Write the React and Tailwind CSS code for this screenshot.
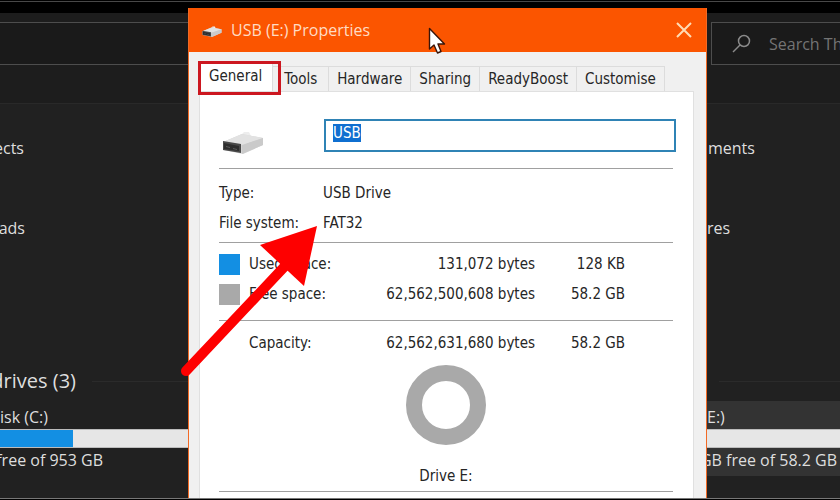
import { useEffect, useRef, useState } from "react";

const tabs = ["General", "Tools", "Hardware", "Sharing", "ReadyBoost", "Customise"];

const usage = [
  { label: "Used space:", bytes: "131,072 bytes", size: "128 KB", color: "bg-[#138fe3]" },
  { label: "Free space:", bytes: "62,562,500,608 bytes", size: "58.2 GB", color: "bg-[#a9a9a9]" },
];

function UsbIcon({ className }) {
  return (
    <svg viewBox="0 0 42 24" className={className} aria-hidden="true">
      <path d="M20 3 L22 1 L27 1 L29 5 Z" fill="#ededed" />
      <path d="M1 11 L20 3 L41 7 L41 14 L21 23 L1 19 Z" fill="#d4d4d4" />
      <path d="M1 11 L20 3 L41 7 L21 14 Z" fill="#e2e2e2" />
      <path d="M20 14 L41 7 L41 14 L20 23 Z" fill="#cacaca" />
      <path d="M1 10 L19 13 L19 22 L1 19 Z" fill="#4a4a4a" />
      <path d="M2 12 L17 15 L17 20 L2 18 Z" fill="#2e2e2e" />
      <path d="M4 15 L8 16 L8 17 L4 16 Z M11 17 L15 18 L15 19 L11 18 Z" fill="#5c5c5c" />
    </svg>
  );
}

function LeftPane() {
  return (
    <section className="flex w-[188px] shrink-0 flex-col overflow-hidden bg-[#212121] text-[#dedede]">
      <div className="h-[5px] bg-black" />
      <div className="border-b border-[#292929] bg-[#1d1d1d] pt-[9px] pb-[38px]">
        <div className="h-[43px] border-y border-[#4d4d4d] bg-[#1a1a1a]" />
      </div>
      <div className="flex h-20 w-6 items-center justify-end pt-2 text-base">ects</div>
      <div className="flex h-20 w-[25px] items-center justify-end pt-2 text-base">ads</div>
      <div className="mt-[97px] flex h-10 items-center gap-4">
        <h2 className="flex w-[76px] shrink-0 justify-end text-xl whitespace-nowrap">drives (3)</h2>
        <div className="h-px grow bg-[#2b2b2b]" />
      </div>
      <div className="mt-1 flex h-6 w-12 items-center justify-end text-base whitespace-nowrap">isk (C:)</div>
      <div className="h-[19px] border-y border-[#bcbcbc] bg-[#e6e6e6]">
        <div className="h-full w-[73px] bg-[#138fe3]" />
      </div>
      <div className="flex h-6 w-[103px] items-center justify-end text-base whitespace-nowrap">free of 953 GB</div>
    </section>
  );
}

function RightPane() {
  return (
    <section className="flex w-[133px] shrink-0 flex-col overflow-hidden bg-[#212121] text-[#dedede]">
      <div className="h-[5px] bg-black" />
      <div className="border-b border-[#292929] bg-[#1d1d1d] pt-[9px] pb-[38px] pl-1">
        <label className="flex h-[43px] items-center gap-[18px] border-y border-l border-[#4d4d4d] bg-[#1a1a1a] pl-5">
          <svg viewBox="0 0 19 19" className="size-[19px] shrink-0" fill="none" stroke="#8a8a8a" strokeWidth="1.5" aria-hidden="true">
            <circle cx="12" cy="7" r="5.5" />
            <path d="M8 11 L1 18" />
          </svg>
          <input
            type="search"
            aria-label="Search"
            placeholder="Search This PC"
            className="w-40 shrink-0 bg-transparent text-base outline-none placeholder:text-[#747474]"
          />
        </label>
      </div>
      <div className="flex h-20 items-center pt-2 pl-px text-base">ments</div>
      <div className="flex h-20 items-center pt-2 text-base">res</div>
      <div className="mt-[97px] flex h-10 items-center pl-3">
        <div className="h-px grow bg-[#2b2b2b]" />
      </div>
      <div className="bg-[#333] pt-1 pb-1">
        <div className="flex h-6 items-center text-base">E:)</div>
        <div className="h-[19px] border-y border-[#bcbcbc] bg-[#e6e6e6]" />
        <div className="flex h-6 w-[130px] items-center justify-end text-base whitespace-nowrap">GB free of 58.2 GB</div>
      </div>
    </section>
  );
}

function TabBar({ active, onSelect }) {
  return (
    <div role="tablist" className="flex h-[29px] items-end text-[15px]">
      {tabs.map((tab) => (
        <button
          key={tab}
          role="tab"
          aria-selected={tab === active}
          onClick={() => onSelect(tab)}
          className={
            tab === active
              ? "h-[29px] border-r border-[#dcdcdc] bg-white px-[10px]"
              : "h-[25px] min-w-14 border-t border-r border-[#dcdcdc] px-2"
          }
        >
          {tab}
        </button>
      ))}
    </div>
  );
}

function PropertiesDialog() {
  const [active, setActive] = useState("General");
  const [name, setName] = useState("USB");
  const nameRef = useRef(null);

  useEffect(() => {
    nameRef.current?.focus();
    nameRef.current?.select();
  }, []);

  return (
    <section role="dialog" aria-label="USB (E:) Properties" className="flex min-w-0 grow flex-col border-x border-[#f26a25] bg-[#f0f0f0] text-[#262626]">
      <header className="flex h-11 items-center bg-[#fb5500] pr-[14px] pl-[13px] text-[#ffdcc4]">
        <UsbIcon className="mt-1 w-5" />
        <h1 className="ml-[9px] grow font-['Open_Sans',sans-serif] text-base">USB (E:) Properties</h1>
        <button aria-label="Close">
          <svg viewBox="0 0 16 16" className="size-4" stroke="#ffdcb4" strokeWidth="2" aria-hidden="true">
            <path d="M1 1 L15 15 M15 1 L1 15" />
          </svg>
        </button>
      </header>

      <div className="flex grow flex-col pt-[10px] pr-3 pl-[10px] font-['DejaVu_Sans_Condensed','DejaVu_Sans',sans-serif]">
        <TabBar active={active} onSelect={setActive} />
        <div className="grow border-x border-t border-[#e0e0e0] bg-white pr-5 pl-[19px] text-[15px]">
          <div className="flex h-[77px] items-center border-b border-[#a0a0a0] pt-[10px]">
            <UsbIcon className="mt-4 ml-[3px] w-[42px]" />
            <input
              ref={nameRef}
              aria-label="Volume name"
              value={name}
              onChange={(e) => setName(e.target.value)}
              className="-mr-[3px] ml-[60px] h-[33px] min-w-0 grow border-2 border-[#2f83b5] px-[7px] pb-1 outline-none selection:bg-[#0f6fd0] selection:text-white"
            />
          </div>

          <dl className="grid grid-cols-[104px_1fr] border-b border-[#a0a0a0] pt-[9px] pb-1 leading-[30px]">
            <dt>Type:</dt>
            <dd>USB Drive</dd>
            <dt>File system:</dt>
            <dd>FAT32</dd>
          </dl>

          <table className="mt-[6px] w-full">
            <tbody>
              {usage.map((row) => (
                <tr key={row.label} className="h-[30px]">
                  <td className="w-[30px]"><div className={`size-[21px] ${row.color}`} /></td>
                  <td>{row.label}</td>
                  <td className="w-[170px] text-right">{row.bytes}</td>
                  <td className="w-[138px] pr-12 text-right">{row.size}</td>
                </tr>
              ))}
              <tr className="h-[11px]"><td colSpan={4} /></tr>
              <tr className="h-[45px] border-t border-[#a0a0a0]">
                <td />
                <td>Capacity:</td>
                <td className="text-right">62,562,631,680 bytes</td>
                <td className="pr-12 text-right">58.2 GB</td>
              </tr>
            </tbody>
          </table>

          <div className="flex flex-col items-center border-b border-[#a0a0a0] pb-1">
            <svg viewBox="0 0 80 80" className="size-20" aria-hidden="true">
              <circle cx="40" cy="40" r="32" fill="none" stroke="#a9a9a9" strokeWidth="16" />
            </svg>
            <p className="mt-5 leading-[22px]">Drive E:</p>
          </div>
        </div>
      </div>
    </section>
  );
}

function Annotations() {
  return (
    <div className="pointer-events-none">
      <div className="absolute top-[61px] left-[198px] h-[34px] w-[83px] border-[3px] border-[#cc1720]" />
      <svg viewBox="0 0 140 156" className="absolute top-[223px] left-[180px] h-[156px] w-[140px]" aria-hidden="true">
        <path d="M6 148 L106 42" stroke="#fe0000" strokeWidth="10" strokeLinecap="round" />
        <path d="M137 3 L80 22 L124 63 Z" fill="#fe0000" />
      </svg>
      <svg viewBox="0 0 18 28" className="absolute top-[27px] left-[428px] h-7 w-[18px]" aria-hidden="true">
        <path d="M1.5 1.5 V22 L6 18 L9.5 26 L13 24.5 L10 17 H16.5 Z" fill="#fff" stroke="#3a1408" strokeWidth="1.4" strokeLinejoin="round" />
      </svg>
    </div>
  );
}

function App() {
  return (
    <main className="relative flex min-h-screen flex-col overflow-hidden bg-black font-['Open_Sans',sans-serif]">
      <div className="h-2 pt-px">
        <div className="h-px bg-[#484848]" />
      </div>
      <div className="flex grow border-b border-[#777]">
        <LeftPane />
        <PropertiesDialog />
        <RightPane />
      </div>
      <div className="h-px bg-black" />
      <Annotations />
    </main>
  );
}

export default App;
